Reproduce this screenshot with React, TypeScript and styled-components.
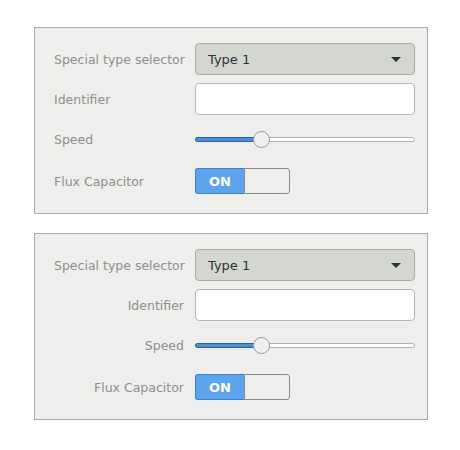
import { useState } from 'react'
import styled, { createGlobalStyle } from 'styled-components'

const GlobalStyle = createGlobalStyle`
  body {
    margin: 0;
    background: #ffffff;
    font-family: "DejaVu Sans", sans-serif;
  }
`

const Page = styled.div`
  padding: 27px 0 0 34px;
  display: flex;
  flex-direction: column;
  gap: 19px;
`

const Panel = styled.div`
  width: 394px;
  box-sizing: border-box;
  background: #eeeeec;
  border: 1px solid #a9a9a7;
  padding: 15px 12px 14px 19px;
`

const Form = styled.div`
  display: grid;
  grid-template-columns: 130px 220px;
  grid-template-rows: 32px 32px 32px 36px;
  column-gap: 11px;
  row-gap: 8px;
  align-items: center;
`

const Label = styled.label<{ $align: 'left' | 'right' }>`
  font-size: 12.5px;
  color: #8d908c;
  white-space: nowrap;
  text-align: ${p => p.$align};
`

const Select = styled.div`
  height: 32px;
  box-sizing: border-box;
  border: 1px solid #a8aaa4;
  border-radius: 4px;
  background: #d3d7cf;
  display: flex;
  align-items: center;
  justify-content: space-between;
  padding: 0 13px 0 12px;
  font-size: 13px;
  color: #2e3436;
`

const Arrow = styled.span`
  width: 0;
  height: 0;
  border-left: 5px solid transparent;
  border-right: 5px solid transparent;
  border-top: 5px solid #2e3436;
`

const Input = styled.input`
  height: 32px;
  box-sizing: border-box;
  border: 1px solid #b6b6b3;
  border-radius: 4px;
  background: #ffffff;
  outline: none;
  padding: 0 8px;
  font: inherit;
`

const Slider = styled.div`
  position: relative;
  height: 32px;
  display: flex;
  align-items: center;
`

const Track = styled.div`
  flex: 1;
  height: 5px;
  box-sizing: border-box;
  border: 1px solid #b0b0ad;
  border-radius: 3px;
  background: #ffffff;
  position: relative;
`

const Fill = styled.div`
  position: absolute;
  left: -1px;
  top: -1px;
  bottom: -1px;
  box-sizing: border-box;
  background: #4a90d9;
  border: 1px solid #2d5f9a;
  border-radius: 3px 0 0 3px;
`

const Thumb = styled.div`
  position: absolute;
  top: 50%;
  width: 17px;
  height: 17px;
  box-sizing: border-box;
  margin: -8px 0 0 -8px;
  border: 1px solid #9a9a98;
  border-radius: 50%;
  background: #efefed;
`

const Switch = styled.div`
  width: 95px;
  height: 26px;
  display: flex;
`

const SwitchOn = styled.div`
  width: 49px;
  box-sizing: border-box;
  background: #5da4ec;
  border: 1px solid #3b82cf;
  border-right: none;
  border-radius: 3px 0 0 3px;
  color: #ffffff;
  font-weight: bold;
  font-size: 13px;
  display: flex;
  align-items: center;
  justify-content: center;
`

const SwitchOff = styled.div`
  flex: 1;
  background: #eeeeec;
  border: 1px solid #8a8a88;
  border-radius: 0 3px 3px 0;
`

const FormPanel = ({ align }: { align: 'left' | 'right' }) => {
  const [speed] = useState(30)

  return (
    <Panel>
      <Form>
        <Label $align={align}>Special type selector</Label>
        <Select>
          Type 1
          <Arrow />
        </Select>

        <Label $align={align}>Identifier</Label>
        <Input />

        <Label $align={align}>Speed</Label>
        <Slider>
          <Track>
            <Fill style={{ width: `${speed}%` }} />
          </Track>
          <Thumb style={{ left: `${speed}%` }} />
        </Slider>

        <Label $align={align}>Flux Capacitor</Label>
        <Switch>
          <SwitchOn>ON</SwitchOn>
          <SwitchOff />
        </Switch>
      </Form>
    </Panel>
  )
}

const App = () => (
  <>
    <GlobalStyle />
    <Page>
      <FormPanel align="left" />
      <FormPanel align="right" />
    </Page>
  </>
)

export default App
